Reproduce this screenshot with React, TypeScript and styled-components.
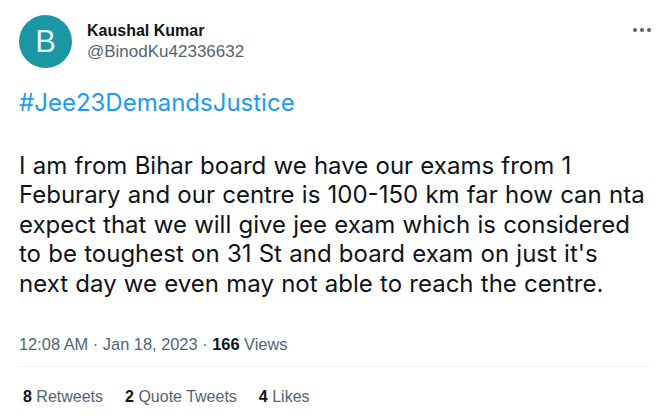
import React from 'react';
import styled, { createGlobalStyle } from 'styled-components';

const GlobalStyle = createGlobalStyle`
  html, body {
    margin: 0;
    padding: 0;
    background: #ffffff;
  }
  body {
    font-family: "Liberation Sans", Arial, sans-serif;
    color: #0f1419;
  }
`;

const Card = styled.article`
  width: 667px;
  height: 416px;
  box-sizing: border-box;
  padding: 15px 16px 0 19px;
  background: #ffffff;
  overflow: hidden;
`;

const Header = styled.header`
  display: flex;
  align-items: flex-start;
`;

const Avatar = styled.div`
  width: 53px;
  height: 53px;
  border-radius: 50%;
  background: #1a97a3;
  color: #e3f6f7;
  display: flex;
  align-items: center;
  justify-content: center;
  font-family: "Liberation Sans", Arial, sans-serif;
  font-size: 31px;
  flex-shrink: 0;
`;

const Names = styled.div`
  display: flex;
  flex-direction: column;
  margin-left: 15px;
  padding-top: 6px;
  flex: 1;
`;

const Name = styled.span`
  font-weight: bold;
  font-size: 16px;
  line-height: 20px;
  color: #0f1419;
`;

const Handle = styled.span`
  font-size: 17px;
  line-height: 22px;
  color: #536471;
`;

const More = styled.div`
  display: flex;
  gap: 3px;
  margin-top: 13px;
`;

const Dot = styled.span`
  width: 4px;
  height: 4px;
  border-radius: 50%;
  background: #536471;
`;

const Body = styled.div`
  font-family: Inter, "Noto Sans", sans-serif;
  font-size: 24px;
  line-height: 29.5px;
  word-spacing: 0.5px;
  color: #0f1419;
`;

const Hashtag = styled.p`
  color: #1d9bf0;
  margin: 20px 0 0;
`;

const Paragraph = styled.p`
  margin: 33px 0 0;
  white-space: nowrap;
`;

const Meta = styled.div`
  margin-top: 36px;
  font-size: 16.4px;
  line-height: 20px;
  color: #536471;
`;

const Strong = styled.b`
  color: #0f1419;
  font-weight: bold;
`;

const Divider = styled.hr`
  border: none;
  border-top: 1px solid #eff3f4;
  margin: 12px 0 0 -2px;
`;

const Stats = styled.div`
  display: flex;
  gap: 22px;
  padding: 20px 0 0 4px;
  font-size: 16px;
  line-height: 20px;
  color: #536471;
`;

const Stat = ({ count, label }: { count: string; label: string }) => (
  <span>
    <Strong>{count}</Strong> {label}
  </span>
);

const lines = [
  'I am from Bihar board we have our exams from 1',
  'Feburary and our centre is 100-150 km far how can nta',
  'expect that we will give jee exam which is considered',
  "to be toughest on 31 St and board exam on just it's",
  'next day we even may not able to reach the centre.',
];

export default function App() {
  return (
    <>
      <GlobalStyle />
      <Card>
        <Header>
          <Avatar>B</Avatar>
          <Names>
            <Name>Kaushal Kumar</Name>
            <Handle>@BinodKu42336632</Handle>
          </Names>
          <More>
            <Dot />
            <Dot />
            <Dot />
          </More>
        </Header>
        <Body>
          <Hashtag>#Jee23DemandsJustice</Hashtag>
          <Paragraph>
            {lines.map((line, i) => (
              <React.Fragment key={i}>
                {line}
                {i < lines.length - 1 && <br />}
              </React.Fragment>
            ))}
          </Paragraph>
        </Body>
        <Meta>
          12:08 AM · Jan 18, 2023 · <Strong>166</Strong> Views
        </Meta>
        <Divider />
        <Stats>
          <Stat count="8" label="Retweets" />
          <Stat count="2" label="Quote Tweets" />
          <Stat count="4" label="Likes" />
        </Stats>
      </Card>
    </>
  );
}
